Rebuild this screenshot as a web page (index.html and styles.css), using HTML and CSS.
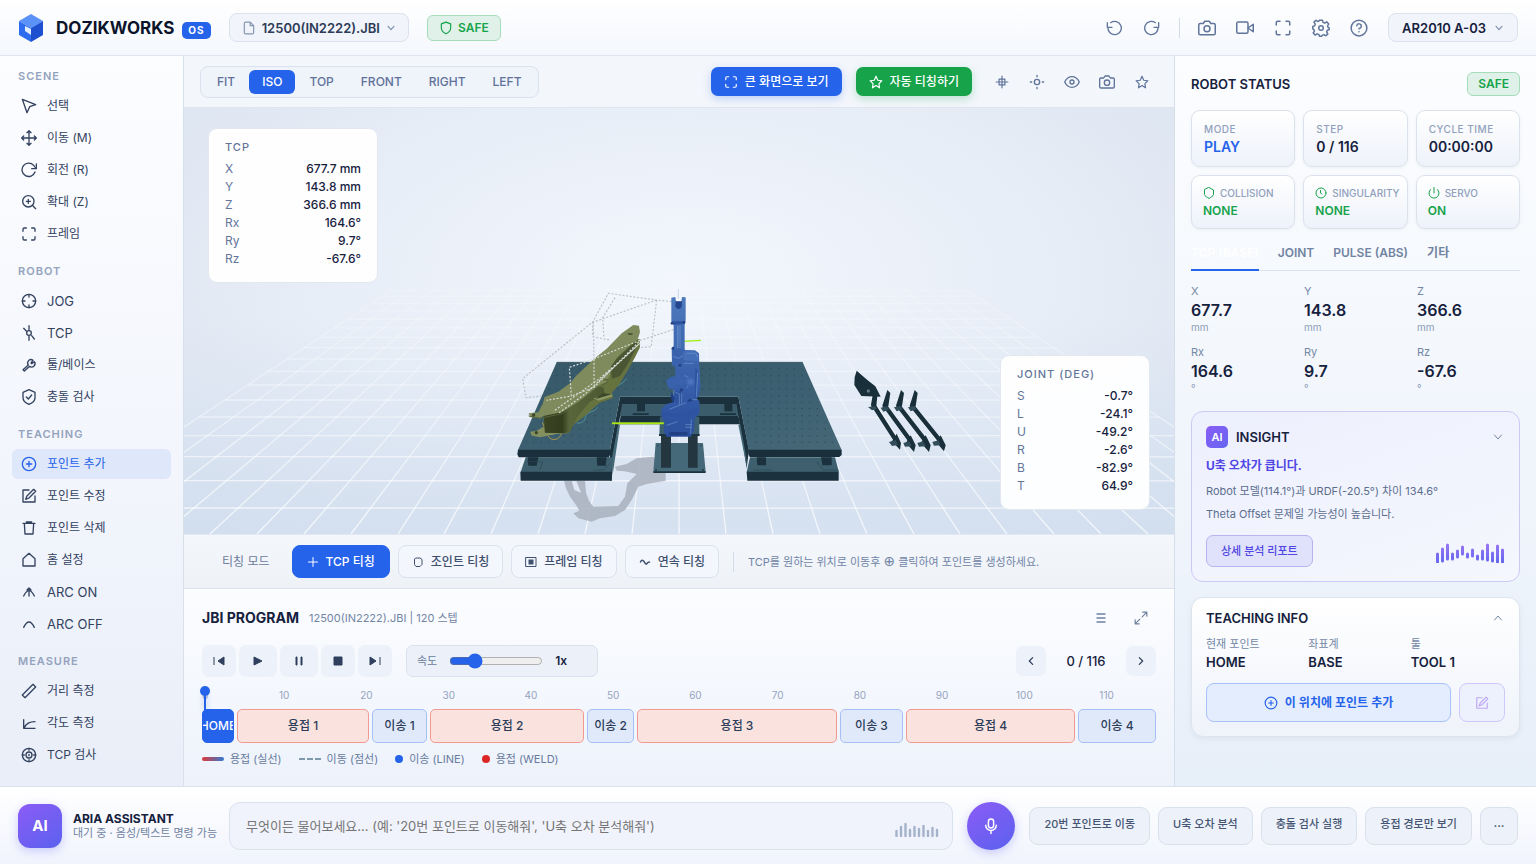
FILE: index.html
```html
<!DOCTYPE html>
<html lang="ko">
<head>
<meta charset="utf-8">
<meta name="viewport" content="width=device-width, initial-scale=1">
<title>DOZIKWORKS OS</title>
<link rel="stylesheet" href="styles.css">
</head>
<body>
<svg class="defs" aria-hidden="true">
  <symbol id="file" viewBox="0 0 24 24"><path d="M14 2H6a2 2 0 0 0-2 2v16a2 2 0 0 0 2 2h12a2 2 0 0 0 2-2V8z M14 2v6h6"/></symbol>
  <symbol id="down" viewBox="0 0 24 24"><path d="M5 8l7 8 7-8"/></symbol>
  <symbol id="up" viewBox="0 0 24 24"><path d="M5 16l7-8 7 8"/></symbol>
  <symbol id="left" viewBox="0 0 24 24"><path d="M16 4l-8 8 8 8"/></symbol>
  <symbol id="right" viewBox="0 0 24 24"><path d="M8 4l8 8-8 8"/></symbol>
  <symbol id="shield" viewBox="0 0 24 24"><path d="M12 22s8-4 8-10V5l-8-3-8 3v7c0 6 8 10 8 10z"/></symbol>
  <symbol id="shield-check" viewBox="0 0 24 24"><path d="M12 1l9 4v8c0 5-4 8-9 10-5-2-9-5-9-10V5z M8 12l3 3 5-6"/></symbol>
  <symbol id="undo" viewBox="0 0 24 24"><path d="M2 4v7h7 M3 11a10 10 0 1 0 4-7"/></symbol>
  <symbol id="redo" viewBox="0 0 24 24"><path d="M22 4v7h-7 M21 11a10 10 0 1 1-4-7"/></symbol>
  <symbol id="rotate" viewBox="0 0 24 24"><path d="M23 3v7h-7 M21 15a10 10 0 1 1-2-10l4 5"/></symbol>
  <symbol id="camera" viewBox="0 0 24 24"><path d="M23 19a2 2 0 0 1-2 2H3a2 2 0 0 1-2-2V8a2 2 0 0 1 2-2h4l2-3h6l2 3h4a2 2 0 0 1 2 2z"/><circle cx="12" cy="13" r="4"/></symbol>
  <symbol id="video" viewBox="0 0 24 24"><rect x="1" y="4" width="15" height="15" rx="2"/><path d="M23 7l-7 5 7 5z"/></symbol>
  <symbol id="expand" viewBox="0 0 24 24"><path d="M8 3H5a2 2 0 0 0-2 2v3 M21 8V5a2 2 0 0 0-2-2h-3 M3 16v3a2 2 0 0 0 2 2h3 M16 21h3a2 2 0 0 0 2-2v-3"/></symbol>
  <symbol id="gear" viewBox="0 0 24 24"><circle cx="12" cy="12" r="3"/><path d="M10 1.500h4l.7 3 2.300 1 2.600-1.700 2.800 2.800L20.700 9.200l1 2.300 1.300.5v2l-2.500.9-1 2.300 1.600 2.600-2.600 2.600-2.700-1.600-2.300 1L13 23h-3l-.8-2.200-2.400-1-2.600 1.600-2.600-2.700 1.700-2.600-1-2.300L1 13v-3l2.300-.8 1-2.300L2.700 4.200l2.500-2.500 2.600 1.600 1.700-.8z"/></symbol>
  <symbol id="help" viewBox="0 0 24 24"><circle cx="12" cy="12" r="10.5"/><path d="M9 9a3 3 0 0 1 6 1c0 2-3 3-3 3 M12 17h.1"/></symbol>
  <symbol id="cursor" viewBox="0 0 24 24"><path d="M2 2l20 8-9 3-4 9z"/></symbol>
  <symbol id="move" viewBox="0 0 24 24"><path d="M12 1v22 M1 12h22 M9 4l3-3 3 3 M9 20l3 3 3-3 M4 9l-3 3 3 3 M20 9l3 3-3 3"/></symbol>
  <symbol id="zoomin" viewBox="0 0 24 24"><circle cx="11" cy="11" r="8.5"/><path d="M17 17l5 5 M11 8v6 M8 11h6"/></symbol>
  <symbol id="jog" viewBox="0 0 24 24"><circle cx="12" cy="12" r="10"/><path d="M12 2v4 M12 18v4 M2 12h4 M18 12h4"/></symbol>
  <symbol id="tcp" viewBox="0 0 24 24"><circle cx="12" cy="12" r="3.500"/><path d="M12 1v6 M12 17v6 M4 5l4 4 M16 16l4 5"/></symbol>
  <symbol id="wrench" viewBox="0 0 24 24"><path d="M15 9l3-4a5 5 0 0 0-7 7l-8 7 2 2 8-7a5 5 0 0 0 7-7l-4 3z"/></symbol>
  <symbol id="plus-circle" viewBox="0 0 24 24"><circle cx="12" cy="12" r="10"/><path d="M12 8v8 M8 12h8"/></symbol>
  <symbol id="edit" viewBox="0 0 24 24"><path d="M12 3H3v18h18v-9 M19 2l3 3-10 10-5 2 2-5z"/></symbol>
  <symbol id="trash" viewBox="0 0 24 24"><path d="M3 5h18 M5 5l1 16h12l1-16 M8 3h8"/></symbol>
  <symbol id="home" viewBox="0 0 24 24"><path d="M3 10l9-8 9 8v11H3z"/></symbol>
  <symbol id="arcon" viewBox="0 0 24 24"><path d="M4 18c3-6 5-8 8-8s5 2 8 8 M12 18V6 M9 9l3-3 3 3"/></symbol>
  <symbol id="arcoff" viewBox="0 0 24 24"><path d="M4 17c3-6 5-8 8-8s5 2 8 8"/></symbol>
  <symbol id="ruler" viewBox="0 0 24 24"><path d="M2 18L18 2l4 4L6 22z"/></symbol>
  <symbol id="angle" viewBox="0 0 24 24"><path d="M4 7v13h17 M5 19c3-7 8-9 16-9"/></symbol>
  <symbol id="target" viewBox="0 0 24 24"><circle cx="12" cy="12" r="10"/><circle cx="12" cy="12" r="4.500"/><path d="M12 2v3 M12 19v3 M2 12h3 M19 12h3 M12 11v2"/></symbol>
  <symbol id="star" viewBox="0 0 24 24"><path d="M12 2l3 7 7 .8-5 5 1 7.200-6-4-6 4 1-7.200-5-5L9 9z"/></symbol>
  <symbol id="grid" viewBox="0 0 24 24"><path d="M7 7h10v10H7z M12 2v20 M2 12h20"/></symbol>
  <symbol id="sun" viewBox="0 0 24 24"><circle cx="12" cy="12" r="4"/><path d="M12 2v2 M12 20v2 M2 12h2 M20 12h2"/></symbol>
  <symbol id="eye" viewBox="0 0 24 24"><path d="M1 12s4-8 11-8 11 8 11 8-4 8-11 8S1 12 1 12z"/><circle cx="12" cy="12" r="3"/></symbol>
  <symbol id="plus" viewBox="0 0 24 24"><path d="M12 3v18 M3 12h18"/></symbol>
  <symbol id="hex" viewBox="0 0 24 24"><path d="M8 4h8l4 3v10l-4 4H8l-3-4V7z"/></symbol>
  <symbol id="square" viewBox="0 0 24 24"><path d="M2 3h20v18H2z"/><path class="solid" d="M7 7h10v10H7z"/></symbol>
  <symbol id="wave" viewBox="0 0 24 24"><path d="M3 12c2-5 5-4 7-1s4 7 6 4 2-3 5-3" stroke-width="3"/></symbol>
  <symbol id="menu" viewBox="0 0 24 24"><path d="M3 4h18 M3 12h18 M3 20h18" stroke-width="4"/></symbol>
  <symbol id="resize" viewBox="0 0 24 24"><path d="M15 2h7v7 M22 2l-8 8 M9 22H2v-7 M2 22l8-8"/></symbol>
  <symbol id="clock" viewBox="0 0 24 24"><circle cx="12" cy="12" r="10"/><path d="M11 7v5l3 2"/></symbol>
  <symbol id="power" viewBox="0 0 24 24"><path d="M12 1v11 M5 5a10 10 0 1 0 14 0"/></symbol>
  <symbol id="hexagon" viewBox="0 0 24 24"><path d="M12 1l9 5v9c0 3-6 6-9 8-3-2-9-5-9-8V6z"/></symbol>
  <symbol id="mic" viewBox="0 0 24 24"><rect x="8.500" y="2.500" width="7" height="12" rx="3.500"/><path d="M5 11a7 7 0 0 0 14 0 M12 18v4"/></symbol>
</svg>

<header class="header">
  <svg class="logo" viewBox="0 0 24 28" aria-hidden="true"><path d="M12 0l12 7-12 7L0 7z" fill="#5b92f8"/><path d="M0 7l12 7v14L0 21z" fill="#2f6df0"/><path d="M24 7l-12 7v14l12-7z" fill="#1d4fd0"/><path d="M6 12l6 3v6l-6-4z" fill="#e3edfb"/></svg>
  <h1 class="brand">DOZIKWORKS</h1>
  <span class="os">OS</span>
  <button class="picker file-picker"><svg class="i14"><use href="#file"/></svg>12500(IN2222).JBI<svg class="i10"><use href="#down"/></svg></button>
  <span class="safe safe-top"><svg class="i14"><use href="#shield"/></svg>SAFE</span>
  <div class="tools">
    <button class="tool" aria-label="실행 취소"><svg><use href="#undo"/></svg></button>
    <button class="tool" aria-label="다시 실행"><svg><use href="#redo"/></svg></button>
    <span class="rule"></span>
    <button class="tool" aria-label="캡처"><svg class="i18"><use href="#camera"/></svg></button>
    <button class="tool" aria-label="녹화"><svg class="i18"><use href="#video"/></svg></button>
    <button class="tool" aria-label="전체 화면"><svg class="i18"><use href="#expand"/></svg></button>
    <button class="tool" aria-label="설정"><svg class="i18"><use href="#gear"/></svg></button>
    <button class="tool" aria-label="도움말"><svg class="i18"><use href="#help"/></svg></button>
  </div>
  <button class="picker robot-picker">AR2010 A-03<svg class="i10"><use href="#down"/></svg></button>
</header>

<main class="workspace">
  <nav class="sidebar">
    <h2>SCENE</h2>
    <button class="nav ko"><svg><use href="#cursor"/></svg>선택</button>
    <button class="nav ko"><svg><use href="#move"/></svg>이동 (M)</button>
    <button class="nav ko"><svg><use href="#rotate"/></svg>회전 (R)</button>
    <button class="nav ko"><svg><use href="#zoomin"/></svg>확대 (Z)</button>
    <button class="nav ko"><svg><use href="#expand"/></svg>프레임</button>
    <h2>ROBOT</h2>
    <button class="nav"><svg><use href="#jog"/></svg>JOG</button>
    <button class="nav"><svg><use href="#tcp"/></svg>TCP</button>
    <button class="nav ko"><svg><use href="#wrench"/></svg>툴/베이스</button>
    <button class="nav ko"><svg><use href="#shield-check"/></svg>충돌 검사</button>
    <h2>TEACHING</h2>
    <button class="nav ko active"><svg><use href="#plus-circle"/></svg>포인트 추가</button>
    <button class="nav ko"><svg><use href="#edit"/></svg>포인트 수정</button>
    <button class="nav ko"><svg><use href="#trash"/></svg>포인트 삭제</button>
    <button class="nav ko"><svg><use href="#home"/></svg>홈 설정</button>
    <button class="nav"><svg><use href="#arcon"/></svg>ARC ON</button>
    <button class="nav"><svg><use href="#arcoff"/></svg>ARC OFF</button>
    <h2>MEASURE</h2>
    <button class="nav ko"><svg><use href="#ruler"/></svg>거리 측정</button>
    <button class="nav ko"><svg><use href="#angle"/></svg>각도 측정</button>
    <button class="nav ko"><svg><use href="#target"/></svg>TCP 검사</button>
  </nav>

  <section class="center">
    <div class="viewbar">
      <div class="views">
        <button>FIT</button><button class="on">ISO</button><button>TOP</button><button>FRONT</button><button>RIGHT</button><button>LEFT</button>
      </div>
      <button class="cta blue"><svg class="i14"><use href="#expand"/></svg>큰 화면으로 보기</button>
      <button class="cta green"><svg class="i14"><use href="#star"/></svg>자동 티칭하기</button>
      <div class="viewtools">
        <button aria-label="격자"><svg class="i14"><use href="#grid"/></svg></button>
        <button aria-label="조명"><svg class="i16"><use href="#sun"/></svg></button>
        <button aria-label="표시"><svg class="i16"><use href="#eye"/></svg></button>
        <button aria-label="카메라"><svg class="i16"><use href="#camera"/></svg></button>
        <button aria-label="즐겨찾기"><svg class="i14"><use href="#star"/></svg></button>
      </div>
    </div>

    <div class="stage">
      <svg class="scene" viewBox="0 0 990 426" preserveAspectRatio="xMidYMid slice" role="img" aria-label="로봇 셀 3D 보기">
        <defs>
          <linearGradient id="fade" x1="0" y1="180" x2="0" y2="426" gradientUnits="userSpaceOnUse"><stop offset="0" stop-color="#fff" stop-opacity=".15"/><stop offset=".5" stop-color="#fff" stop-opacity=".45"/><stop offset="1" stop-color="#fff" stop-opacity=".75"/></linearGradient>
          <linearGradient id="top" x1="0" y1="0" x2="1" y2="1"><stop offset="0" stop-color="#365868"/><stop offset=".6" stop-color="#3d6172"/><stop offset="1" stop-color="#466877"/></linearGradient>
          <linearGradient id="arm" x1="0" y1="0" x2="0" y2="1"><stop offset="0" stop-color="#4d79bd"/><stop offset="1" stop-color="#2a4f9e"/></linearGradient>
          <linearGradient id="olive" x1="0" y1="0" x2="1" y2="0"><stop offset="0" stop-color="#3b4524"/><stop offset=".3" stop-color="#333c1d"/><stop offset=".42" stop-color="#59663b"/><stop offset="1" stop-color="#4c5832"/></linearGradient>
          <pattern id="holes" width="23" height="20" patternUnits="userSpaceOnUse" patternTransform="translate(4 6)"><path d="M10 9h4v3h-4z" fill="#25414f"/></pattern>
        </defs>
        <g stroke="url(#fade)" stroke-width="1.300" fill="none">
          <path d="M208 181.700L-162 426M228.500 181.700L-115 426M249 181.700L-68 426M269.500 181.700L-21 426M290 181.700L26 426M310.500 181.700L73 426M331 181.700L120 426M351.500 181.700L167 426M372 181.700L214 426M392.500 181.700L260 426M413 181.700L307 426M433.500 181.700L354 426M454 181.700L401 426M474.500 181.700L448 426M495 181.700L495.100 426M515.500 181.700L542 426M536 181.700L589 426M556.500 181.700L636 426M577 181.700L683 426M597.500 181.700L730 426M618 181.700L776 426M638.500 181.700L823 426M659 181.700L870 426M679.500 181.700L917 426M700 181.700L964 426M720.500 181.700L1011 426M741 181.700L1058 426M761.500 181.700L1105 426M782 181.700L1152 426"/>
          <path d="M208 181.700L782 181.800M198 188.300L792 188.400M187 195.300L803 195.400M176 202.900L814 203M164 211L826 211.100M150 219.800L840 219.900M136 229.300L854 229.400M120 239.700L870 239.800M103 251L887 251.100M84 263.400L906 263.500M64 277L926 277.100M41 292L949 292.100M15 309L975 309.100M-10 327.600L1000 327.700M-10 348.700L1000 348.800M-10 372.700L1000 372.800M-10 400L1000 400.100"/>
        </g>
        <g transform="translate(306 162) scale(.33333)">
          <path fill="#aab2be" fill-opacity=".88" d="M222 632H285L288 668 297 692 310 710 385 708 405 680 412 640 440 612 404 604 380 602 375 590 410 582 440 565 490 560 527 600V632L470 642 445 650 425 690 405 720 375 738 330 745 305 755 265 745 250 730 268 722 258 705 240 680 228 655z"/>
          <path fill="#dfe8f4" d="M259 632l14 36-20-8-8-26z"/>
          <path fill="#1b323e" d="M390 380h355v24H390zM392 436h353l5 27H388z"/>
          <path fill="#3a5c6b" d="M394 403h349l4 35H390z"/>
          <path fill="#1b323e" d="M441 402h24v22h-24zM703 402h24v22h-24zM428 430h48v5h-48zM690 430h48v5h-48z"/>
          <path fill="#1b323e" d="M390 380l6 25-26 155-5 72h-5V540zM745 380l-5 25 30 190 7-55z"/>
          <path fill="#466a79" d="M390 464l-22 150-2-50 18-100zM745 464l26 130-2-30-18-100z"/>
          <path fill="#3e606e" d="M107 562h262l-5 45H92zM780 562h255l12 45H770z"/>
          <path fill="#1b323e" d="M91 605h274v27H92zM770 605h276v27H772zM113 562h32l-5 25h-25zM320 562h30l-3 25h-25zM800 562h28v24h-26zM993 562h32v24h-28z"/>
          <path fill="url(#top)" d="M200 277h738l117 263H776l-31-160H390l-30 160H84z"/>
          <path fill="url(#holes)" d="M205 283h726l108 245H784l-31-160H384l-30 160H102z"/>
          <path fill="#192f3b" d="M84 539h277v14l-4 9H86l-4-9zM775 539h280v16l-7 6H779l-4-9z"/>
          <path d="M200 277h738M108 574l50 2-8 25M310 600l30 0 20-20M790 600h55M980 574l20 26h45" fill="none" stroke="#294653" stroke-width="2"/>
          <path fill="#46697a" d="M497 519h142l8 87H490z"/><path fill="#1b323e" d="M490 604h157v5H490z"/><path fill="#243741" d="M513 490h30v103h-30zM594 490h29v103h-29z"/><path fill="#3e6073" d="M510 440h118v54H508z"/><path fill="#1c3441" d="M507 492h122v6H507z"/>
          <circle cx="503" cy="527" r="2" fill="#203a46"/><circle cx="633" cy="527" r="2" fill="#203a46"/><circle cx="498" cy="600" r="3" fill="#203a46"/><circle cx="639" cy="600" r="3" fill="#203a46"/>

          <path d="M157 456l8 22M173 496c9 18 36 18 42-8" fill="none" stroke="#dfaa36" stroke-width="2"/>
          <path d="M260 459c20 2 24-8 28-22 10-16 22-8 35-25M354 368c12-17 32-16 57-42" fill="none" stroke="#579a9e" stroke-width="2.500"/>
          <path fill="#849060" d="M121 485L140 482 160 470 168 488 235 490 200 492 150 502 125 497z"/>
          <path fill="#66733f" d="M436 208L449 207 450 232 435 262 415 298 390 340 366 368 369 384 328 399 285 437 245 468 235 490 165 488 160 440z"/>
          <path fill="url(#olive)" d="M161 436L215 426 240 412 300 372 322 350 340 352 345 372 300 395 262 440 240 486 222 490 165 488z"/>
          <path fill="#4a5633" d="M362 292L378 268 432 218 443 212 434 242 412 285 390 318 366 326z"/>
          <path fill="#7f8b5c" d="M430 165L447 167 450 186 444 206 432 216 385 258 363 289 360 315 349 335 320 350 280 385 240 412 215 427 160 438 150 445 121 442 116 430 145 427 158 402 164 381 205 365 240 340 258 318 300 278 320 260 350 236 395 190z"/>
          <path fill="#8d9867" d="M310 385L365 372 368 379 326 392z"/>
          <path fill="#3b4528" d="M340 370L365 373 315 388z"/>
          <path d="M116 438L150 445 215 431 245 414 320 353 356 336" stroke="#56623a" stroke-width="3" fill="none"/>
          <circle cx="131" cy="435" r="5" fill="#3b4626"/><circle cx="139" cy="488" r="5" fill="#3b4626"/><ellipse cx="421" cy="192" rx="8" ry="3" fill="#4a5633"/><ellipse cx="348" cy="329" rx="8" ry="3" fill="#5d683d"/>
          <path d="M545 95L500 90 355 70 308 156 98 326 108 383 155 378M500 90L484 230 448 233M500 90L310 156 312 268M308 156V200L360 210M375 83L338 143 342 204M550 179L450 211" fill="none" stroke="#bbc1c8" stroke-width="3.500" stroke-dasharray="6 5"/>
          <path d="M312 268V355M450 211L314 266 238 292 244 378 170 391M446 216L312 352 244 378M450 220L330 325 190 424M445 224L285 372 205 430" fill="none" stroke="#d8ddda" stroke-width="3.500" stroke-dasharray="6 5"/>

          <path d="M366 460h155" stroke="#8ed321" stroke-width="6"/><path d="M366 460h155" stroke="#b8e814" stroke-width="3"/><path d="M580 214l53-3" stroke="#9cee10" stroke-width="4"/><path d="M565 57v30" stroke="#c8d5ef" stroke-width="3"/>
          <path fill="url(#arm)" d="M544 83L556 81 558 95 574 95 576 81 587 82V150L584 165V240L615 241 627 250 628 285 632 350 625 380 618 388 628 392 629 430 614 446 612 480 602 500H530L522 484 524 455 514 440V418L530 402 552 396V360L534 352 529 332 540 322 556 318V292L546 285 545 235 551 228V165L544 155z"/>
          <path fill="#23458d" d="M557 94h19l-1 16-5 6h-9l-5-7z"/>
          <path fill="#3f6bb3" d="M552 168h7v63h-7zM574 168h7v64h-7z"/>
          <path fill="#6c92cb" d="M562 168h3v66h-3zM569 168h2v66h-2z"/>
          <path fill="#3a62ac" d="M548 238h36v46l-12 8-22-4zM558 298l32 4 4 18-8 22-28 6z"/>
          <path fill="#4570b8" d="M581 244h32l12 9 1 20-46-3z"/>
          <path fill="#2f549f" d="M547 154h36v8l-34 2zM518 425l58 7 51-20v18l-46 14-62-8zM524 458h86l-3 26-83 4zM554 362l22 4-2 34-20-2zM616 296h6l-2 84-6 6z"/>
          <g fill="none" stroke="#6e94ce" stroke-width="2"><path d="M590 250h28l5 12M549 259l17 6 13-8M552 360l-5 34M556 367l12 5v32M575 370v30M584 317c20 5 22 24 4 38M580 280h32M602 390l22-2M538 418l50-20M530 466l32-11M586 464h20M586 472h19M604 448l-2 44M623 309l-4 72"/></g>
          <g fill="#213f83"><circle cx="546" cy="160" r="4"/><circle cx="582" cy="157" r="4"/><circle cx="549" cy="235" r="4"/><circle cx="570" cy="286" r="4"/><circle cx="574" cy="360" r="5"/><path d="M545 365l9 20-5 15-7-18zM600 385l10 7-19 4zM538 486h54v10h-54z"/></g>
          <circle cx="601" cy="335" r="14" fill="#3f68b3"/><circle cx="601" cy="335" r="8" fill="#4b74bd"/><path d="M532 332l20-10 13 8-4 24-24 2z" fill="#3a62ac"/>

          <g fill="#192f3a"><path d="M1100 302L1132 330 1156 349 1172 380 1114 378 1093 345 1094 322z"/><path d="M1148 376l14 2-3 30-14 6-2-10zM1192 360l9 9-6 40-14 8-4-10zM1233 360l9 9-6 40-14 8-4-10zM1274 360l9 9-6 40-14 8-4-10z"/><path d="M1206 514l14-23 13 28-3 20zM1248 518l14-22 15 30-5 20zM1293 518l14-22 15 30-5 20zM1338 516l14-20 15 30-5 18z"/></g>
          <path d="M1152 408L1216 508M1188 412L1264 516M1229 412L1308 514M1270 412L1352 514" stroke="#192f3a" stroke-width="13" fill="none"/>
          <path fill="#324d5a" d="M1134 411l22-2 4 8-14 4zM1172 413l18-4 8 10-18 6zM1212 412l18-4 8 10-18 6zM1254 412l18-4 8 10-18 6zM1197 516l20-6 7 15-18 3zM1240 519l18-5 7 15-20 1zM1282 519l18-5 7 15-20 1zM1327 516l18-5 7 15-20 1z"/><circle cx="1135" cy="363" r="5" fill="#63797e"/>
        </g>
      </svg>
      <section class="readout tcp">
        <h3>TCP</h3>
        <dl><dt>X</dt><dd>677.7 mm</dd><dt>Y</dt><dd>143.8 mm</dd><dt>Z</dt><dd>366.6 mm</dd><dt>Rx</dt><dd>164.6°</dd><dt>Ry</dt><dd>9.7°</dd><dt>Rz</dt><dd>-67.6°</dd></dl>
      </section>
      <section class="readout joint">
        <h3>JOINT (DEG)</h3>
        <dl><dt>S</dt><dd>-0.7°</dd><dt>L</dt><dd>-24.1°</dd><dt>U</dt><dd>-49.2°</dd><dt>R</dt><dd>-2.6°</dd><dt>B</dt><dd>-82.9°</dd><dt>T</dt><dd>64.9°</dd></dl>
      </section>
    </div>

    <div class="modes">
      <span class="modes-label">티칭 모드</span>
      <button class="mode on"><svg><use href="#plus"/></svg>TCP 티칭</button>
      <button class="mode"><svg><use href="#hex"/></svg>조인트 티칭</button>
      <button class="mode"><svg><use href="#square"/></svg>프레임 티칭</button>
      <button class="mode"><svg><use href="#wave"/></svg>연속 티칭</button>
      <span class="rule"></span>
      <p class="hint">TCP를 원하는 위치로 이동후 <span class="glyph">⊕</span> 클릭하여 포인트를 생성하세요.</p>
    </div>

    <section class="program">
      <div class="program-head">
        <h2>JBI PROGRAM</h2><span>12500(IN2222).JBI | 120 스텝</span>
        <button class="bare menu-button" aria-label="목록"><svg class="i12 flat"><use href="#menu"/></svg></button>
        <button class="bare" aria-label="확대"><svg class="i14"><use href="#resize"/></svg></button>
      </div>
      <div class="transport">
        <button class="key" aria-label="처음"><svg viewBox="0 0 14 14"><path d="M2 3v8M12 3v8L6 7z"/></svg></button>
        <button class="key wide" aria-label="재생"><svg viewBox="0 0 14 14"><path d="M3 3v8l8-4z"/></svg></button>
        <button class="key wide" aria-label="일시정지"><svg viewBox="0 0 14 14"><path d="M4 3h1v8H4zM9 3h1v8H9z"/></svg></button>
        <button class="key" aria-label="정지"><svg viewBox="0 0 14 14"><path d="M3 3h8v8H3z"/></svg></button>
        <button class="key" aria-label="끝"><svg viewBox="0 0 14 14"><path d="M12 3v8M2 3v8l6-4z"/></svg></button>
        <div class="speed"><label for="speed">속도</label><input id="speed" type="range" min="0.1" max="4" step="0.1" value="1"><output for="speed">1x</output></div>
        <button class="page" aria-label="이전"><svg class="i10"><use href="#left"/></svg></button>
        <span class="count">0 / 116</span>
        <button class="page" aria-label="다음"><svg class="i10"><use href="#right"/></svg></button>
      </div>
      <div class="timeline">
        <div class="ticks"><span class="first">0</span><span>10</span><span>20</span><span>30</span><span>40</span><span>50</span><span>60</span><span>70</span><span>80</span><span>90</span><span>100</span><span>110</span><span class="last"></span></div>
        <div class="track">
          <button class="seg start" style="flex-grow:30">HOME</button>
          <button class="seg weld" style="flex-grow:130">용접 1</button>
          <button class="seg line" style="flex-grow:53">이송 1</button>
          <button class="seg weld" style="flex-grow:152">용접 2</button>
          <button class="seg line" style="flex-grow:45">이송 2</button>
          <button class="seg weld" style="flex-grow:198">용접 3</button>
          <button class="seg line" style="flex-grow:61">이송 3</button>
          <button class="seg weld" style="flex-grow:167">용접 4</button>
          <button class="seg line" style="flex-grow:76">이송 4</button>
        </div>
        <i class="playhead"></i>
      </div>
      <div class="legend">
        <span><i class="bar"></i>용접 (실선)</span><span><i class="dash"></i>이동 (점선)</span><span><i class="dot"></i>이송 (LINE)</span><span><i class="dot red"></i>용접 (WELD)</span>
      </div>
    </section>
  </section>

  <aside class="panel">
    <div class="panel-head"><h2>ROBOT STATUS</h2><span class="safe">SAFE</span></div>
    <div class="stats">
      <div class="stat"><h3>MODE</h3><strong class="play">PLAY</strong></div>
      <div class="stat"><h3>STEP</h3><strong>0 / 116</strong></div>
      <div class="stat"><h3>CYCLE TIME</h3><strong>00:00:00</strong></div>
      <div class="stat check"><h3><svg class="i12"><use href="#hexagon"/></svg>COLLISION</h3><strong>NONE</strong></div>
      <div class="stat check"><h3><svg class="i12"><use href="#clock"/></svg>SINGULARITY</h3><strong>NONE</strong></div>
      <div class="stat check"><h3><svg class="i12"><use href="#power"/></svg>SERVO</h3><strong>ON</strong></div>
    </div>
    <div class="tabs" role="tablist">
      <button role="tab" aria-selected="true">TCP (BASE)</button><button role="tab">JOINT</button><button role="tab">PULSE (ABS)</button><button role="tab">기타</button>
    </div>
    <div class="coords">
      <div><span>X</span><strong>677.7</strong><small>mm</small></div>
      <div><span>Y</span><strong>143.8</strong><small>mm</small></div>
      <div><span>Z</span><strong>366.6</strong><small>mm</small></div>
      <div><span>Rx</span><strong>164.6</strong><small>°</small></div>
      <div><span>Ry</span><strong>9.7</strong><small>°</small></div>
      <div><span>Rz</span><strong>-67.6</strong><small>°</small></div>
    </div>
    <section class="card insight">
      <div class="card-head"><span class="ai">AI</span><h2>INSIGHT</h2><button class="fold" aria-label="접기"><svg class="i12"><use href="#down"/></svg></button></div>
      <p class="alert">U축 오차가 큽니다.</p>
      <p>Robot 모델(114.1°)과 URDF(-20.5°) 차이 134.6°</p>
      <p>Theta Offset 문제일 가능성이 높습니다.</p>
      <div class="insight-foot">
        <button class="report">상세 분석 리포트</button>
        <svg class="spectrum" viewBox="0 0 69 20" aria-hidden="true"><defs><linearGradient id="violet" gradientUnits="userSpaceOnUse" x1="0" y1="0" x2="0" y2="20"><stop offset="0" stop-color="#9c76f3"/><stop offset="1" stop-color="#6467ee"/></linearGradient></defs><path d="M1.500 11v8M6.500 6v12M11.500 2v14M16.500 11v5M21.500 8v6M26.500 4v7M31.500 11v3M36.500 7v6M41.500 13v3M46.500 8v8M51.500 2v15M56.500 10v8M61.500 3v16M66.500 7v12" stroke="url(#violet)" stroke-width="3" stroke-linecap="round"/></svg>
      </div>
    </section>
    <section class="card teaching">
      <div class="card-head"><h2>TEACHING INFO</h2><button class="fold" aria-label="접기"><svg class="i12"><use href="#up"/></svg></button></div>
      <div class="facts">
        <div><span>현재 포인트</span><strong>HOME</strong></div><div><span>좌표계</span><strong>BASE</strong></div><div><span>툴</span><strong>TOOL 1</strong></div>
      </div>
      <div class="actions">
        <button class="add"><svg class="i14"><use href="#plus-circle"/></svg>이 위치에 포인트 추가</button>
        <button class="modify" aria-label="포인트 수정"><svg class="i14"><use href="#edit"/></svg></button>
      </div>
    </section>
  </aside>
</main>

<footer class="assistant">
  <span class="avatar">AI</span>
  <div class="who"><strong>ARIA ASSISTANT</strong><span>대기 중 · 음성/텍스트 명령 가능</span></div>
  <div class="ask">
    <input type="text" aria-label="명령" placeholder="무엇이든 물어보세요... (예: '20번 포인트로 이동해줘', 'U축 오차 분석해줘')">
    <svg class="voice" viewBox="0 0 44 14" aria-hidden="true"><path d="M1.500 8v5M6 4v9M10.500 1v12M15 7v6M19.500 4v9M24 6v7M28.500 3v10M33 8v5M37.500 5v8M42 7v6" stroke="#a4b2cb" stroke-width="2.400" stroke-linecap="round"/></svg>
  </div>
  <button class="mic" aria-label="음성 입력"><svg class="i18"><use href="#mic"/></svg></button>
  <div class="chips">
    <button>20번 포인트로 이동</button><button>U축 오차 분석</button><button>충돌 검사 실행</button><button>용접 경로만 보기</button><button class="more">···</button>
  </div>
</footer>
</body>
</html>
```
FILE: styles.css
```css
* { box-sizing: border-box; }
body {
  margin: 0;
  height: 100vh;
  display: flex;
  flex-direction: column;
  overflow: hidden;
  color: #16213d;
  font: 12px/16px Inter, "Noto Sans CJK KR", sans-serif;
  background: #eef2fa;
}
h1, h2, h3, p, dl, dd { margin: 0; }
button, input { font: inherit; color: inherit; margin: 0; }
button {
  border: 0;
  padding: 0;
  background: none;
  display: flex;
  align-items: center;
  justify-content: center;
  white-space: nowrap;
  cursor: pointer;
}
svg {
  width: 16px;
  height: 16px;
  flex: none;
  fill: none;
  stroke: currentColor;
  stroke-width: 2;
  stroke-linecap: round;
  stroke-linejoin: round;
}
.defs { position: absolute; width: 0; height: 0; }
.i10 { width: 10px; height: 10px; stroke-width: 3; }
.i12 { width: 12px; height: 12px; }
.i14 { width: 14px; height: 14px; }
.i16 { width: 16px; height: 16px; }
.i18 { width: 18px; height: 18px; }
.flat { stroke-linecap: butt; }
.solid { fill: currentColor; stroke: none; }

/* Header */
.header {
  height: 56px;
  flex: none;
  display: flex;
  align-items: center;
  padding: 0 18px;
  background: linear-gradient(#fff, #f4f7fc);
  border-bottom: 1px solid #dfe4ee;
}
.logo { width: 26px; height: 28px; margin-right: 12px; stroke: none; }
.brand { font-size: 17px; line-height: 24px; font-weight: 700; color: #0b132b; }
.os {
  margin: 6px 18px 0 8px;
  padding: 0 6px;
  border-radius: 5px;
  background: #2563eb;
  color: #fff;
  font-size: 10px;
  line-height: 17px;
  font-weight: 700;
  letter-spacing: 1px;
}
.picker {
  height: 29px;
  border: 1px solid #dbe2ee;
  border-radius: 8px;
  background: #f1f4fb;
  font-size: 13px;
  font-weight: 600;
}
.picker svg { color: #8595b2; }
.file-picker { color: #2d3b57; padding: 0 12px; gap: 6px; }
.robot-picker { margin-left: 12px; padding: 0 13px; gap: 8px; }
.safe {
  display: flex;
  align-items: center;
  gap: 5px;
  height: 24px;
  padding: 0 10px;
  border: 1px solid #a5dcba;
  border-radius: 6px;
  background: #dff1e8;
  color: #16a34a;
  font-weight: 600;
}
.safe-top { height: 26px; margin-left: 18px; padding: 0 11px; }
.tools { margin-left: auto; display: flex; align-items: center; gap: 4px; color: #61759b; }
.tool { width: 34px; height: 34px; }
.rule { width: 1px; height: 20px; background: #d5dce9; }
.tools .rule { margin: 0 6px; }

/* Frame */
.workspace { flex: 1; min-height: 0; display: flex; }
.sidebar {
  width: 184px;
  flex: none;
  padding: 10px 12px;
  border-right: 1px solid #d8e0ec;
  background: linear-gradient(#fcfdff, #f2f5fc 60%, #e9eef8);
}
.sidebar h2 {
  margin: 12px 0 6px;
  padding-left: 6px;
  font-size: 11px;
  line-height: 20px;
  font-weight: 600;
  letter-spacing: 1px;
  color: #94a3bd;
  height: 19px;
}
.sidebar h2:first-child { margin-top: 0; }
.nav {
  width: 100%;
  height: 30px;
  margin-bottom: 2px;
  padding: 0 9px;
  gap: 10px;
  justify-content: flex-start;
  border-radius: 6px;
  color: #33425f;
  font-size: 13px;
}
.nav.ko { font-size: 12px; }
.nav.active { background: #dfe7fa; color: #2563eb; }
.center { flex: 1; min-width: 0; display: flex; flex-direction: column; background: #f3f6fb; }

.viewbar { height: 52px; flex: none; padding: 0 17px 0 16px; display: flex; align-items: center; border-bottom: 1px solid #dde5ef; }
.views { height: 32px; padding: 3px; gap: 1px; display: flex; margin-right: auto; border: 1px solid #dbe2ee; border-radius: 8px; background: #eff3fa; }
.views button { height: 24px; padding: 0 13px; border-radius: 6px; font-weight: 500; color: #60729a; }
.views .on { background: #2563eb; color: #fff; }
.cta { height: 29px; padding: 0 13px; gap: 7px; border-radius: 7px; color: #fff; font-weight: 500; }
.blue { background: #2563eb; box-shadow: 0 3px 8px #2563eb40; }
.green { background: #16a34a; margin-left: 14px; box-shadow: 0 3px 8px #16a34a40; }
.viewtools { display: flex; gap: 5px; margin-left: 15px; color: #5f739b; }
.viewtools button { width: 30px; height: 30px; }

/* Scene */
.stage { flex: 1; min-height: 0; position: relative; background: radial-gradient(ellipse at 50% 40%, #f3f6fd 0, #e7eef7 50%, #e1e8f3 75%, #d9e4f0 100%); }
.stage::before { content: ""; position: absolute; inset: 50% 0 0; background: linear-gradient(transparent, #cddbee99); }
.scene { position: absolute; inset: 0; width: 100%; height: 100%; stroke: none; stroke-linecap: butt; }
.readout { position: absolute; height: 155px; padding: 10px 16px 14px; border: 1px solid #e3e8f0; border-radius: 9px; background: #fffffff0; }
.readout.tcp { left: 24px; top: 20px; width: 170px; }
.readout.joint { right: 24px; bottom: 24px; width: 150px; }
.readout h3 { font-size: 11px; line-height: 16px; font-weight: 500; letter-spacing: 1px; color: #63759a; margin-bottom: 5px; }
.readout dl { display: grid; grid-template-columns: auto 1fr; line-height: 18px; }
.readout dt { color: #64769b; }
.readout dd { text-align: right; font-weight: 500; }

.modes {
  height: 55px;
  flex: none;
  padding: 0 38px;
  display: flex;
  align-items: center;
  gap: 8px;
  border-top: 1px solid #e2e8f1;
  border-bottom: 1px solid #dbe2ee;
  background: linear-gradient(#f4f7fc, #eef1f6);
}
.modes-label { color: #6b7b9a; margin-right: 14px; }
.mode { height: 33px; padding: 0 13px; gap: 7px; border: 1px solid #dbe2ed; border-radius: 8px; background: #f3f6fc; color: #40506f; font-weight: 500; }
.mode svg { width: 12px; height: 12px; }
.mode.on { padding: 0 14px; background: #2563eb; border-color: #2563eb; color: #fff; }
.modes .rule { margin: 0 6px; }
.hint { color: #7084a6; font-size: 11px; white-space: nowrap; }
.glyph { font-family: "DejaVu Sans", sans-serif; font-size: 14px; }

/* Program */
.program { flex: none; height: 197px; padding: 16px 18px; background: linear-gradient(#fcfdff, #edf2fb); }
.program-head { display: flex; align-items: center; height: 26px; }
.program h2 { font-size: 14px; font-weight: 700; margin-right: 10px; }
.program-head span { font-size: 11px; color: #7285a5; margin-right: auto; }
.bare { width: 30px; height: 26px; color: #70819f; }
.menu-button { margin-right: 10px; color: #91a0ba; }
.transport { display: flex; align-items: center; gap: 3px; margin-top: 14px; }
.key { width: 34px; height: 32px; border-radius: 7px; background: #edf1f9; }
.key.wide { width: 38px; }
.key svg { width: 14px; height: 14px; fill: #2f3f5d; stroke: #2f3f5d; stroke-width: 1; stroke-linecap: butt; stroke-linejoin: miter; }
.speed { width: 192px; height: 32px; margin: 0 auto 0 11px; padding: 0 10px; display: flex; align-items: center; border: 1px solid #d9e1ed; border-radius: 7px; background: #ecf1f9; }
.speed label { color: #687b9d; font-size: 11px; }
.speed input { width: 94px; margin: 0 12px; accent-color: #2563eb; }
.speed output { font-weight: 600; }
.page { width: 30px; height: 30px; border-radius: 7px; background: #edf1f9; color: #2f3f5d; }
.count { width: 74px; text-align: center; font-size: 13px; font-weight: 500; }
.timeline { position: relative; margin-top: 8px; }
.ticks { display: flex; height: 24px; line-height: 20px; font-size: 10px; color: #94a3bd; }
.ticks span { flex: 10 1 0; min-width: 0; text-align: center; }
.ticks .first { flex-grow: 5; text-align: left; }
.ticks .last { flex-grow: 1; }
.track { display: flex; gap: 3px; height: 34px; }
.seg { flex-basis: 0; min-width: 0; overflow: hidden; border: 1px solid; border-radius: 5px; font-size: 12px; font-weight: 500; color: #2c3c59; }
.start { background: #2563eb; border-color: #2563eb; color: #fff; }
.weld { background: #fae3df; border-color: #f19a92; }
.line { background: #e0e9f9; border-color: #a6c0f5; }
.playhead { position: absolute; left: 2px; top: 4px; width: 2px; height: 22px; background: #2563eb; box-shadow: 0 0 6px #2563eb60; }
.playhead::before { content: ""; position: absolute; left: -4px; top: -3px; width: 10px; height: 10px; border-radius: 50%; background: #2563eb; }
.legend { display: flex; gap: 17px; margin-top: 8px; font-size: 11px; color: #687b9d; }
.legend span { display: flex; align-items: center; gap: 6px; }
.bar { width: 22px; height: 4px; border-radius: 2px; background: linear-gradient(90deg, #dc3939, #327bd0); }
.dash { width: 22px; height: 2px; background: repeating-linear-gradient(90deg, #7e99ae 0 6px, transparent 6px 8px); }
.dot { width: 8px; height: 8px; border-radius: 50%; background: #2563eb; }
.red { background: #dc2626; }

/* Status panel */
.panel { width: 362px; flex: none; padding: 16px; border-left: 1px solid #d5dfeb; background: linear-gradient(#fcfdff, #f6f9fd 30%, #e7eff9); }
.panel h2 { font-size: 13px; font-weight: 600; }
.panel-head { display: flex; align-items: center; justify-content: space-between; height: 24px; margin-bottom: 14px; }
.stats { display: grid; grid-template-columns: repeat(3, minmax(0, 1fr)); gap: 8px; }
.stat { height: 57px; padding: 9px 12px; border: 1px solid #dce2ec; border-radius: 9px; background: linear-gradient(#fff, #eef2fa); box-shadow: 0 1px 3px #94a3b820; }
.stat h3 { display: flex; align-items: center; gap: 5px; font-size: 10px; line-height: 18px; font-weight: 500; letter-spacing: 0.5px; color: #91a0bc; }
.stat strong { display: block; font-size: 14px; line-height: 18px; font-weight: 600; }
.stat .play { color: #2563eb; }
.stat.check { height: 54px; padding: 8px 11px; }
.check h3 { letter-spacing: 0; }
.check svg, .stat.check strong { color: #16a34a; }
.stat.check strong { font-size: 12px; }
.tabs { display: flex; gap: 19px; height: 34px; margin-top: 8px; border-bottom: 1px solid #dae2ed; }
.tabs button { height: 34px; padding-bottom: 1px; border-bottom: 2px solid transparent; font-weight: 600; color: #7083a1; }
.tabs [aria-selected="true"] { color: #fff; border-color: #2563eb; }
.coords { display: grid; grid-template-columns: repeat(3, 1fr); gap: 11px 10px; margin-top: 12px; }
.coords div, .facts div { display: flex; flex-direction: column; }
.coords span { font-size: 11px; line-height: 16px; color: #7488a6; }
.coords strong { font-size: 16px; line-height: 22px; font-weight: 600; }
.coords small { font-size: 10px; line-height: 12px; color: #8c9cb7; }
.card { margin-top: 15px; padding: 14px; border: 1px solid #dde4ed; border-radius: 12px; background: linear-gradient(#fff, #eff3fa); box-shadow: 0 2px 5px #94a3b824; }
.insight { margin-top: 17px; border-color: #cec8f7; background: linear-gradient(160deg, #edf0fd, #f5f7fe); box-shadow: none; }
.card-head { display: flex; align-items: center; height: 22px; }
.ai { width: 22px; height: 22px; margin-right: 8px; border-radius: 5px; background: linear-gradient(135deg, #8b5cf6, #6366f1); color: #fff; font-size: 11px; line-height: 22px; font-weight: 600; text-align: center; }
.fold { margin-left: auto; width: 15px; height: 20px; color: #7588a5; }
.insight p { margin-top: 7px; color: #5b6e8f; font-size: 11px; line-height: 16px; white-space: nowrap; }
.insight .alert { margin: 10px 0 9px; font-size: 12px; font-weight: 700; color: #4f46e5; }
.insight-foot { display: flex; justify-content: space-between; align-items: center; margin-top: 13px; }
.report { height: 32px; padding: 0 14px; border: 1px solid #b9b4f1; border-radius: 7px; background: #e0e1fa; color: #4f46e5; font-size: 11px; font-weight: 500; }
.spectrum { width: 69px; height: 20px; margin-top: 4px; stroke: none; }
.teaching { padding-top: 9px; }
.facts { display: grid; grid-template-columns: repeat(3, 1fr); gap: 8px; margin-top: 6px; }
.facts span { font-size: 11px; line-height: 18px; color: #7488a6; }
.facts strong { font-size: 13px; line-height: 18px; font-weight: 600; }
.actions { display: flex; gap: 8px; margin-top: 12px; }
.add { flex: 1; height: 39px; gap: 7px; border: 1px solid #a5c2fa; border-radius: 8px; background: #e4edfd; color: #2563eb; font-weight: 600; }
.modify { width: 46px; border: 1px solid #d0c7fb; border-radius: 8px; background: #edf1fd; color: #bea8f2; }

/* Assistant */
.assistant { height: 78px; flex: none; padding: 0 18px; display: flex; align-items: center; border-top: 1px solid #d8e1ed; background: linear-gradient(#fff, #f1f4fd); }
.avatar { width: 44px; height: 44px; border-radius: 12px; background: linear-gradient(145deg, #8b5cf6, #5b61ee); box-shadow: 0 3px 10px #6366f14d; color: #fff; font-size: 15px; line-height: 44px; font-weight: 700; text-align: center; }
.who { width: 145px; margin: 0 11px; display: flex; flex-direction: column; white-space: nowrap; }
.who strong { font-weight: 700; line-height: 14px; }
.who span { font-size: 11px; line-height: 14px; color: #7083a1; }
.ask { flex: 1; height: 48px; min-width: 0; padding: 0 13px 0 16px; display: flex; align-items: center; border: 1px solid #dae2ee; border-radius: 11px; background: #f0f3fb; }
.ask input { flex: 1; min-width: 0; border: 0; padding: 0; outline: 0; background: none; font-size: 13px; }
.ask input::placeholder { color: #757575; }
.voice { width: 44px; height: 14px; margin-top: 8px; }
.mic { width: 48px; height: 48px; margin: 0 14px; border-radius: 50%; background: linear-gradient(145deg, #8b5cf6, #5b61ee); box-shadow: 0 3px 10px #6366f14d; color: #fff; }
.chips { display: flex; gap: 8px; }
.chips button { height: 38px; padding: 0 14px 3px; border: 1px solid #d9e1ec; border-radius: 9px; background: #edf1f9; color: #455573; font-size: 11px; font-weight: 500; }
.chips .more { width: 38px; padding: 0; font-weight: 700; }
```
